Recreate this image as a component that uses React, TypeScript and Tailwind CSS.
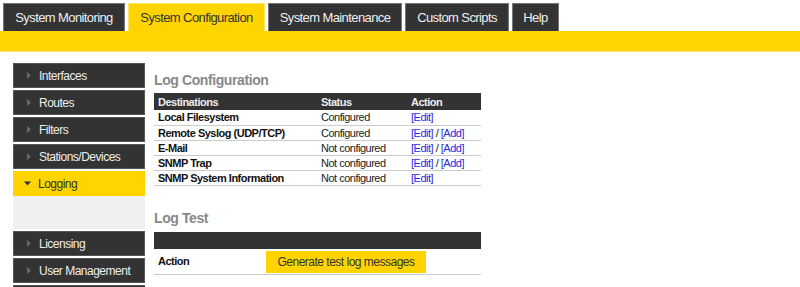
import { useState } from "react";

const TABS = [
  { label: "System Monitoring", w: "w-[122px]" },
  { label: "System Configuration", w: "w-[137px]" },
  { label: "System Maintenance", w: "w-[134px]" },
  { label: "Custom Scripts", w: "w-[104px]" },
  { label: "Help", w: "w-[47px]" },
];

const MENU = ["Interfaces", "Routes", "Filters", "Stations/Devices", "Logging", "Licensing", "User Management"];

const DESTINATIONS = [
  { name: "Local Filesystem", status: "Configured", add: false },
  { name: "Remote Syslog (UDP/TCP)", status: "Configured", add: true },
  { name: "E-Mail", status: "Not configured", add: true },
  { name: "SNMP Trap", status: "Not configured", add: true },
  { name: "SNMP System Information", status: "Not configured", add: false },
];

function Arrow({ open }: { open?: boolean }) {
  return open ? (
    <svg width="7" height="5" viewBox="0 0 7 5" className="mr-[7px]">
      <path d="M0 0.5 L7 0.5 L3.5 4.5 Z" fill="#333" />
    </svg>
  ) : (
    <svg width="4" height="7" viewBox="0 0 4 7" className="mr-[8px] ml-[1px]">
      <path d="M0 0 L4 3.5 L0 7 Z" fill="#6a6a6a" />
    </svg>
  );
}

export default function App() {
  const [tab, setTab] = useState("System Configuration");
  const [active, setActive] = useState("Logging");

  return (
    <div className="w-[800px] h-[287px] overflow-hidden bg-white font-['Liberation_Sans',Arial,sans-serif]">
      <div className="flex gap-[3px] pl-[3px] pt-[3px]">
        {TABS.map((t) => (
          <button
            key={t.label}
            onClick={() => setTab(t.label)}
            className={
              t.label === tab
                ? `${t.w} h-[28px] text-[13px] tracking-[-0.6px] bg-[#ffd400] text-[#333] border border-b-0 border-[#ffe566]`
                : `${t.w} h-[28px] text-[13px] tracking-[-0.6px] bg-[#333] text-[#eee] border border-b-0 border-[#777]`
            }
          >
            {t.label}
          </button>
        ))}
      </div>
      <div className="h-[21px] bg-[#ffd400] border-b border-[#ffe680]" />

      <div className="flex pt-[11px]">
        <div className="w-[132px] ml-[13px] flex flex-col gap-[2px]">
          {MENU.map((m) => (
            <div key={m}>
              <div
                onClick={() => setActive(m)}
                className={
                  m === active
                    ? "h-[25px] flex items-center pl-[11px] text-[12px] tracking-[-0.5px] bg-[#ffd400] text-[#333] cursor-pointer"
                    : "h-[25px] flex items-center pl-[12px] text-[12px] tracking-[-0.5px] bg-[#333] text-[#eee] border border-[#555] cursor-pointer whitespace-nowrap"
                }
              >
                <Arrow open={m === active} />
                {m}
              </div>
              {m === active && <div className="h-[33px] bg-[#f0f0f0]" />}
            </div>
          ))}
          {/* next menu entry, cut off by the window */}
          <div className="h-[25px] bg-[#333] border border-[#555]" />
        </div>

        <div className="ml-[9px] w-[327px]">
          <h2 className="text-[14px] tracking-[-0.4px] font-bold text-[#888] mt-[8px] mb-[4px] leading-[18px]">
            Log Configuration
          </h2>
          <table className="w-full text-[11px] tracking-[-0.5px] leading-[14px] border-collapse">
            <thead>
              <tr className="bg-[#333] text-[#eee] h-[17px]">
                <th className="text-left font-bold pl-[4px] w-[167px]">Destinations</th>
                <th className="text-left font-bold w-[90px]">Status</th>
                <th className="text-left font-bold">Action</th>
              </tr>
            </thead>
            <tbody>
              {DESTINATIONS.map((d) => (
                <tr key={d.name} className="h-[15px] border-b border-[#ccc]">
                  <td className="pl-[4px] p-0 font-bold text-[#111]">{d.name}</td>
                  <td className="p-0 text-[#222]">{d.status}</td>
                  <td className="p-0 text-[#222]">
                    <a href="#" className="text-[#2a2ae0]">[Edit]</a>
                    {d.add && (
                      <>
                        {" / "}
                        <a href="#" className="text-[#2a2ae0]">[Add]</a>
                      </>
                    )}
                  </td>
                </tr>
              ))}
            </tbody>
          </table>

          <h2 className="text-[14px] tracking-[-0.4px] font-bold text-[#888] mt-[23px] mb-[5px] leading-[18px]">
            Log Test
          </h2>
          <div className="h-[17px] bg-[#333]" />
          <div className="flex items-center h-[26px] border-b border-[#ccc] pt-[2px] pb-[1px]">
            <span className="pl-[4px] w-[112px] text-[11px] tracking-[-0.5px] font-bold text-[#111]">Action</span>
            <button className="h-[22px] w-[160px] bg-[#ffd400] text-[12px] tracking-[-0.5px] text-[#333]">
              Generate test log messages
            </button>
          </div>
        </div>
      </div>
    </div>
  );
}
